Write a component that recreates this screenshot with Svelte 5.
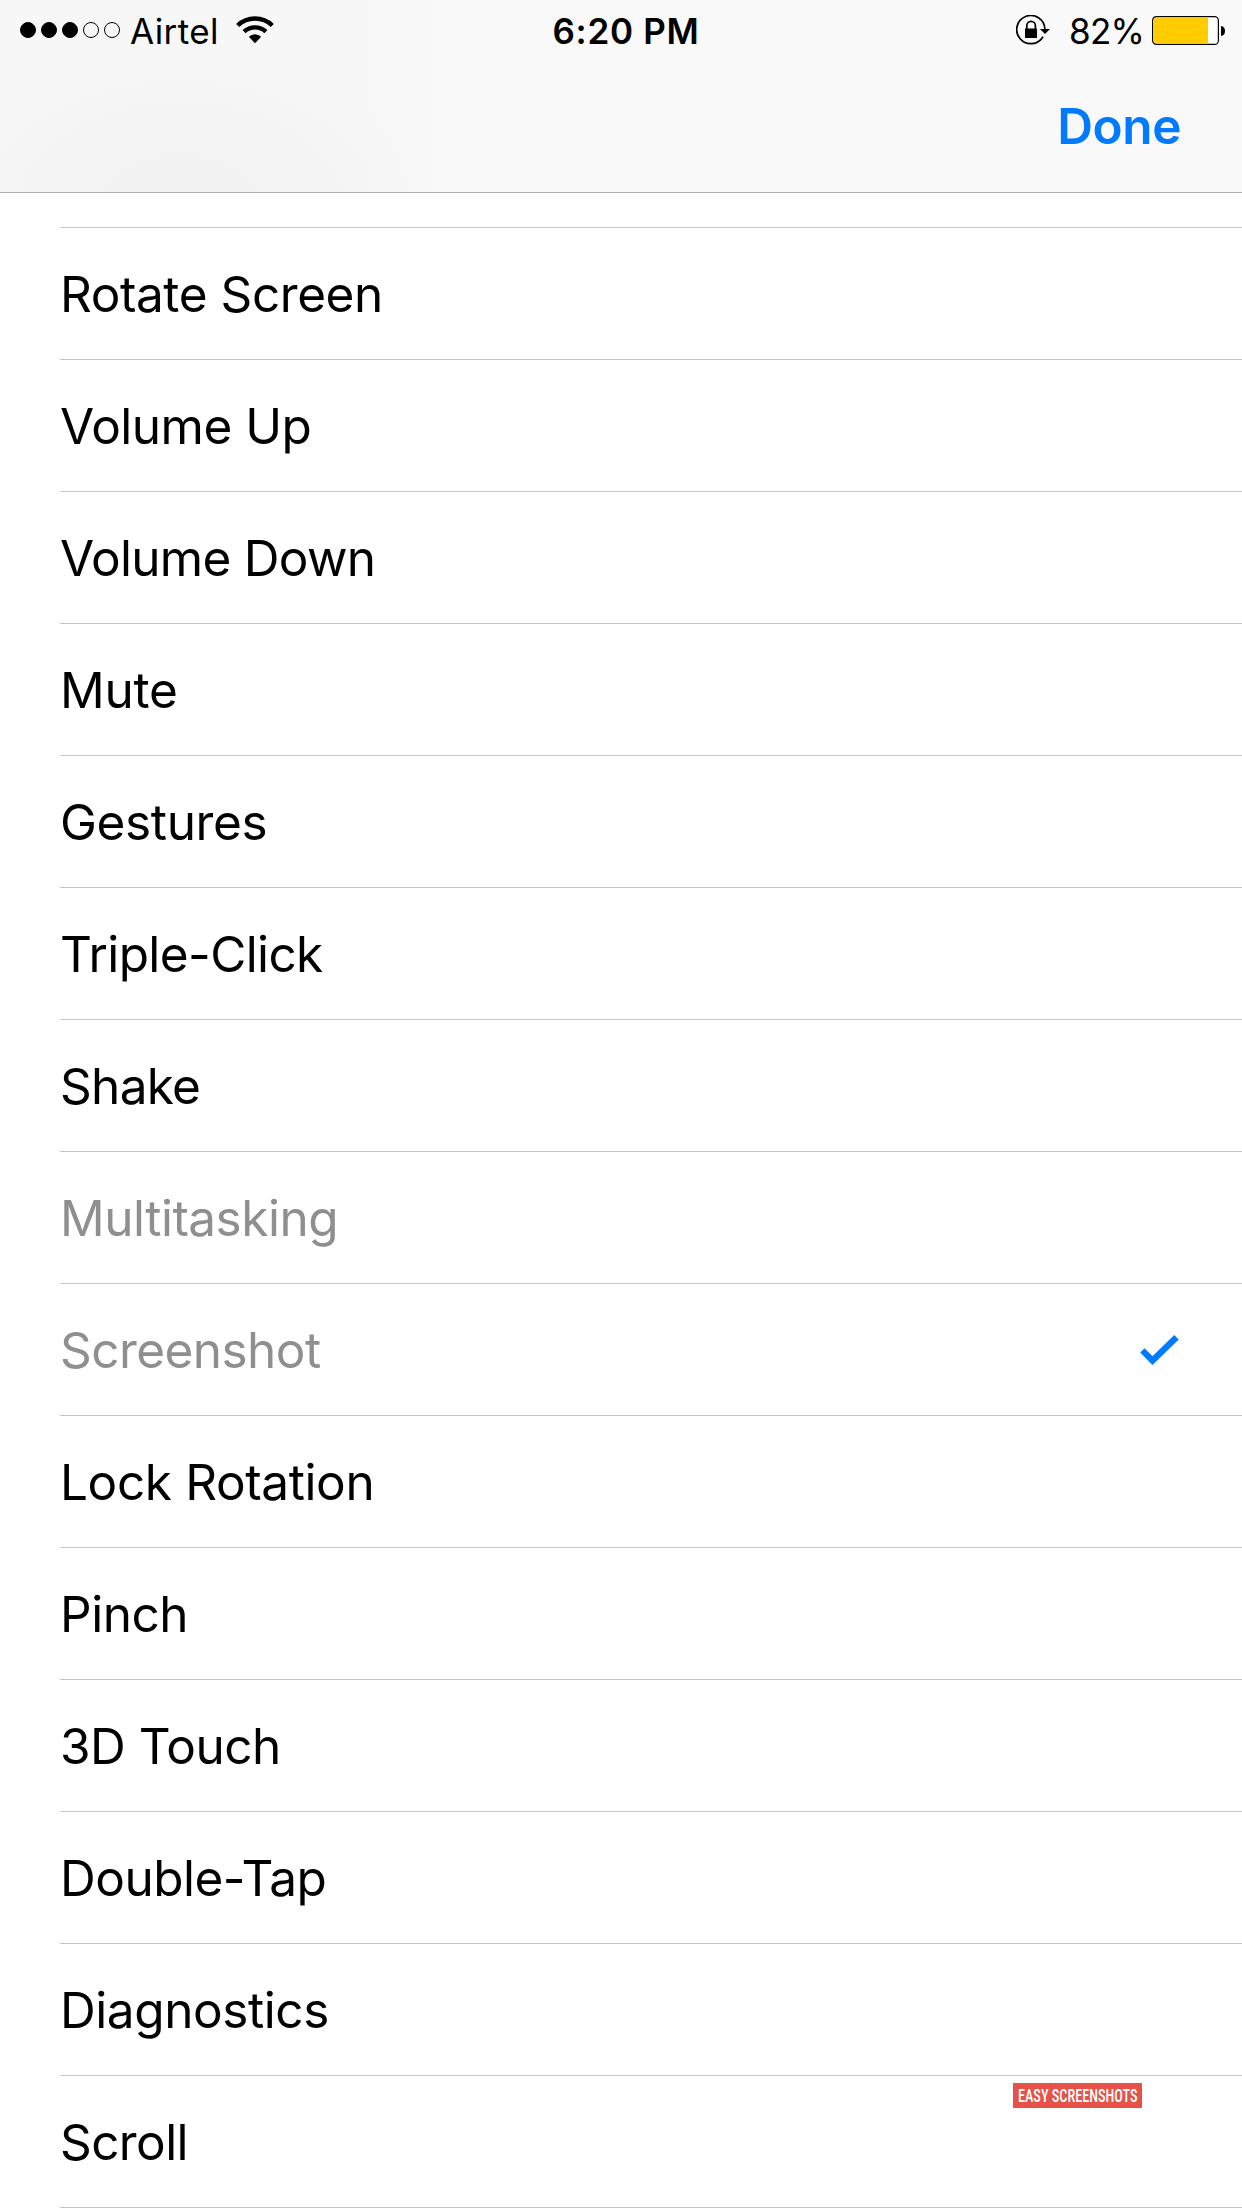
<script>
  // tracking: letter spacing in px for each label
  const rows = [
    { label: 'Rotate Screen', tracking: -0.42 },
    { label: 'Volume Up', tracking: -0.5 },
    { label: 'Volume Down', tracking: -0.7 },
    { label: 'Mute', tracking: -0.23 },
    { label: 'Gestures', tracking: -0.36 },
    { label: 'Triple-Click', tracking: -0.62 },
    { label: 'Shake', tracking: -0.7 },
    { label: 'Multitasking', tracking: -0.5, disabled: true },
    { label: 'Screenshot', tracking: -0.55, disabled: true, selected: true },
    { label: 'Lock Rotation', tracking: -0.38 },
    { label: 'Pinch', tracking: -0.45 },
    { label: '3D Touch', tracking: -0.5 },
    { label: 'Double-Tap', tracking: -0.5 },
    { label: 'Diagnostics', tracking: -0.42 },
    { label: 'Scroll', tracking: -0.6 }
  ];
  const signal = [true, true, true, false, false];
</script>

<div class="screen">
  <header>
    <div class="status">
      <div class="left">
        <div class="dots">
          {#each signal as on}<i class:on></i>{/each}
        </div>
        <span class="carrier">Airtel</span>
        <svg class="wifi" width="38" height="28" viewBox="0 0 38 28">
          <g fill="none" stroke="#000" stroke-width="4.4">
            <path d="M1.7 9.500a25 25 0 0 1 34.6 0" />
            <path d="M8.1 15.7a15.8 15.8 0 0 1 21.8 0" />
          </g>
          <path d="M19 27.2l-6.2-6.4a8.8 8.8 0 0 1 12.4 0z" />
        </svg>
      </div>
      <span class="time">6:20 PM</span>
      <div class="right">
        <svg class="lock" width="34" height="32" viewBox="0 0 34 32">
          <path d="M27 21.7A14.1 14.1 0 1 1 28.9 14" fill="none" stroke="#000" stroke-width="1.7" />
          <path d="M24 14h10l-5 5z" />
          <path d="M9 13.5h12v9.5H9z" />
          <path d="M10.8 14V10.6a4.3 4.3 0 0 1 8.6 0V14" fill="none" stroke="#000" stroke-width="1.7" />
        </svg>
        <span class="percent">82%</span>
        <svg class="battery" width="73" height="30" viewBox="0 0 73 30">
          <rect x=".6" y=".6" width="65.8" height="27.8" rx="4" fill="#fff" stroke="#000" stroke-width="1.2" />
          <path d="M4 2H56V27H4a2.2 2.2 0 0 1-2.2-2.2V4.2A2.2 2.2 0 0 1 4 2z" fill="#fc0" />
          <path d="M69 10c2.600.3 4 2.200 4 4.900s-1.400 4.700-4 5.100z" />
        </svg>
      </div>
    </div>
    <nav><button>Done</button></nav>
  </header>

  <ul>
    <li class="stub"></li>
    {#each rows as row}
      <li class:disabled={row.disabled}>
        <span style="letter-spacing: {row.tracking}px">{row.label}</span>
        {#if row.selected}
          <svg width="39" height="31" viewBox="0 0 39 31">
            <path d="M.2 17.400L4.500 13.300L12.500 21.200L34.200 0L38.700 4.500L12.500 30z" fill="#007aff" />
          </svg>
        {/if}
      </li>
    {/each}
  </ul>

  <div class="badge"><span>EASY SCREENSHOTS</span></div>
</div>

<style>
  .screen {
    position: relative;
    width: 1242px;
    height: 2208px;
    overflow: hidden;
    background: #fff;
    color: #000;
    font-family: Inter, 'Liberation Sans', sans-serif;
  }
  header {
    height: 193px;
    box-sizing: border-box;
    border-bottom: 1px solid #b2b2b2;
    background:
      radial-gradient(ellipse 240px 150px at 180px 205px, #f1f1f1 0%, #f3f3f3 45%, #f5f5f5 75%, transparent 100%),
      linear-gradient(90deg, #f7f7f7 0, #f7f7f7 340px, #f9f9f9 460px);
  }
  .status {
    display: grid;
    grid-template-columns: 1fr auto 1fr;
    height: 60px;
    padding: 0 17px 0 20px;
    font-size: 35px;
    line-height: 60px;
  }
  .status span {
    padding-top: 2px;
    white-space: nowrap;
  }
  .left,
  .right {
    display: flex;
    align-items: center;
    height: 60px;
  }
  .right {
    justify-content: flex-end;
  }
  .dots {
    display: flex;
    gap: 5px;
    margin-right: 10px;
  }
  .dots i {
    width: 16px;
    height: 16px;
    box-sizing: border-box;
    border: 1px solid #000;
    border-radius: 50%;
  }
  .dots .on {
    background: #000;
  }
  .carrier {
    letter-spacing: 0.4px;
  }
  .wifi {
    margin-left: 17px;
  }
  .status .time {
    padding: 1px 0 0 7px;
    font-weight: 600;
    letter-spacing: 0.7px;
  }
  .lock {
    margin-top: 2px;
  }
  .percent {
    margin: 0 8px 0 19px;
    letter-spacing: -0.8px;
  }
  .battery {
    margin-top: 2px;
  }
  nav {
    display: flex;
    justify-content: flex-end;
    height: 132px;
    padding-right: 61px;
  }
  button {
    padding: 0;
    border: 0;
    background: none;
    color: #007aff;
    font: 600 49.5px/132px Inter, 'Liberation Sans', sans-serif;
    letter-spacing: -0.4px;
  }
  ul {
    margin: 0;
    padding: 0 0 0 60px;
    list-style: none;
  }
  li {
    display: flex;
    align-items: center;
    justify-content: space-between;
    height: 132px;
    box-sizing: border-box;
    padding: 1px 63px 0 0;
    border-bottom: 1px solid #c6c6c8;
    font-size: 49.5px;
    line-height: 130px;
  }
  .stub {
    height: 35px;
  }
  .disabled {
    color: #8f8f8f;
  }
  .badge {
    position: absolute;
    left: 1013px;
    top: 2083px;
    display: flex;
    align-items: center;
    justify-content: center;
    width: 129px;
    height: 25px;
    background: #e65248;
    color: #fff;
  }
  .badge span {
    flex: none;
    font: 500 19px/25px 'Roboto Condensed', Roboto, sans-serif;
    white-space: nowrap;
    transform: scaleX(0.75);
  }
</style>
